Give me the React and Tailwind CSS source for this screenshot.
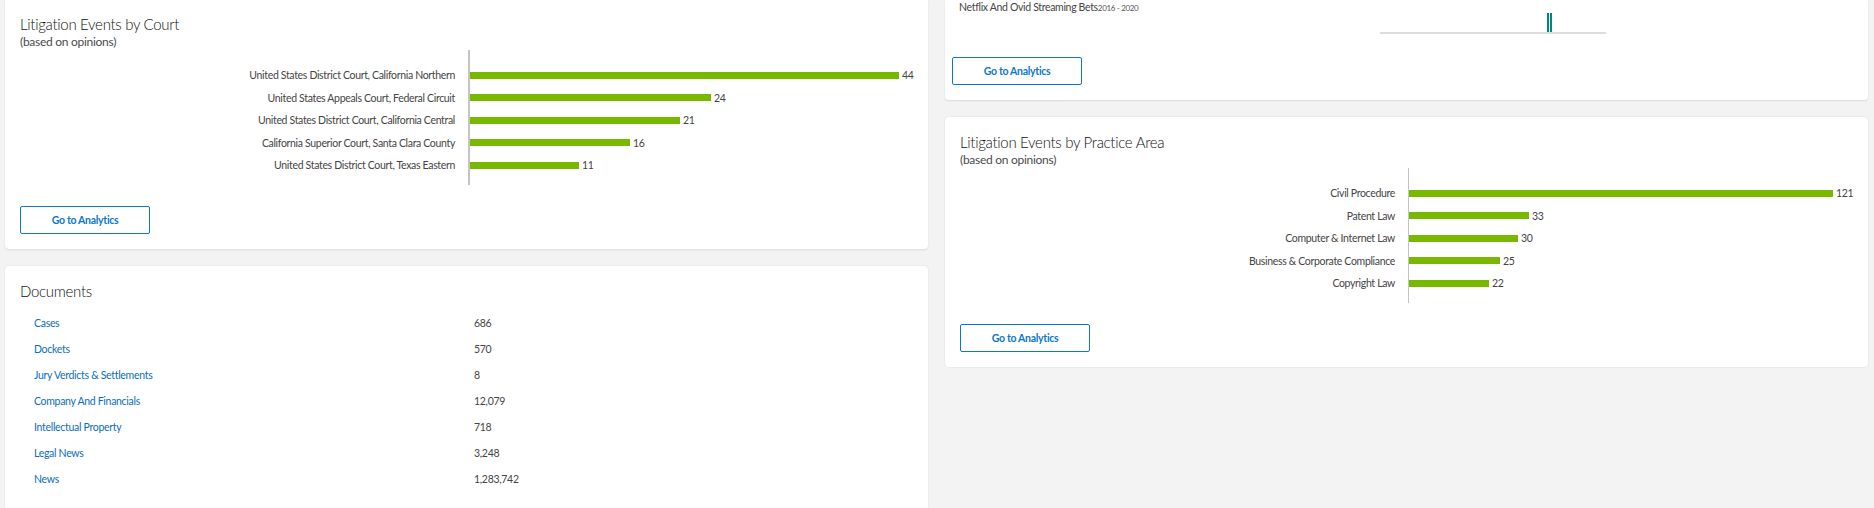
const courts = [
  { label: "United States District Court, California Northern", value: "44", bar: "w-[429px]" },
  { label: "United States Appeals Court, Federal Circuit", value: "24", bar: "w-[241px]" },
  { label: "United States District Court, California Central", value: "21", bar: "w-[210px]" },
  { label: "California Superior Court, Santa Clara County", value: "16", bar: "w-[160px]" },
  { label: "United States District Court, Texas Eastern", value: "11", bar: "w-[109px]" },
];

const practiceAreas = [
  { label: "Civil Procedure", value: "121", bar: "w-[424px]" },
  { label: "Patent Law", value: "33", bar: "w-[120px]" },
  { label: "Computer & Internet Law", value: "30", bar: "w-[109px]" },
  { label: "Business & Corporate Compliance", value: "25", bar: "w-[91px]" },
  { label: "Copyright Law", value: "22", bar: "w-[80px]" },
];

const documents = [
  { label: "Cases", value: "686" },
  { label: "Dockets", value: "570" },
  { label: "Jury Verdicts & Settlements", value: "8" },
  { label: "Company And Financials", value: "12,079" },
  { label: "Intellectual Property", value: "718" },
  { label: "Legal News", value: "3,248" },
  { label: "News", value: "1,283,742" },
];

const AnalyticsButton = ({ className }) => (
  <button
    className={`flex h-[28px] w-[130px] items-center justify-center rounded-[2px] border border-[#0a78cc] bg-white pt-[1px] text-[10.5px] font-bold tracking-[-0.3px] text-[#0a78cc] ${className}`}
  >
    Go to Analytics
  </button>
);

const CardTitle = ({ children }) => (
  <h2 className="h-[24px] text-[15px] leading-[24px] font-light tracking-[-0.3px] text-[#111111]">{children}</h2>
);

const EventsChart = ({ rows, labelWidth, axisClass, gapClass }) => (
  <div className="flex h-[135px] text-[10.5px] tracking-[-0.33px] text-[#444444]">
    <div className={`${labelWidth} ${gapClass} shrink-0 pt-[14px]`}>
      {rows.map((row) => (
        <div key={row.label} className="flex h-[22.5px] items-center justify-end whitespace-nowrap pt-[2px]">
          {row.label}
        </div>
      ))}
    </div>
    <div className={`grow pt-[14px] ${axisClass}`}>
      {rows.map((row) => (
        <div key={row.label} className="flex h-[22.5px] items-center gap-[3px]">
          <div className={`h-[7px] bg-[#78b900] ${row.bar}`} />
          <span className="pt-[2px]">{row.value}</span>
        </div>
      ))}
    </div>
  </div>
);

export default function App() {
  return (
    <div className="flex h-[508px] gap-[17px] overflow-hidden bg-[#f3f3f3] pl-[5px] font-[Lato,sans-serif]">
      {/* Left column */}
      <div className="flex w-[923px] shrink-0 flex-col gap-[17px]">
        <section className="h-[249px] shrink-0 rounded-b-[4px] bg-white pt-[12px] pl-[15px] shadow-[0_1px_2px_rgba(0,0,0,0.1)]">
          <CardTitle>Litigation Events by Court</CardTitle>
          <p className="h-[14px] text-[12px] leading-[12px] tracking-[-0.28px] text-[#4a4a4a]">(based on opinions)</p>
          <EventsChart
            rows={courts}
            labelWidth="w-[448px]"
            gapClass="pr-[13px]"
            axisClass="border-l-2 border-[#c4c4c4]"
          />
          <AnalyticsButton className="mt-[21px]" />
        </section>

        <section className="grow rounded-t-[4px] bg-white pt-[13px] pl-[15px] shadow-[0_0_2px_rgba(0,0,0,0.1)]">
          <CardTitle>Documents</CardTitle>
          <div className="mt-[7.5px] pl-[14px] text-[10.5px] tracking-[-0.3px]">
            {documents.map((doc) => (
              <div key={doc.label} className="grid h-[26.1px] grid-cols-[440px_1fr] items-center">
                <a className="text-[#0a6ebd]">{doc.label}</a>
                <span className="text-[#444444]">{doc.value}</span>
              </div>
            ))}
          </div>
        </section>
      </div>

      {/* Right column */}
      <div className="flex w-[923px] shrink-0 flex-col gap-[17px]">
        <section className="h-[100px] shrink-0 rounded-b-[4px] bg-white pl-[7px] shadow-[0_1px_2px_rgba(0,0,0,0.1)]">
          <div className="flex h-[34px] pl-[7px]">
            <div className="w-[421px] shrink-0 text-[10.5px] leading-[15px] tracking-[-0.33px] text-[#444444]">
              Netflix And Ovid Streaming Bets<span className="text-[8px] text-[#555555]">2016 - 2020</span>
            </div>
            <div className="flex h-[34px] w-[226px] gap-px border-b-2 border-[#dcdcdc] pt-[13px] pl-[167px]">
              <div className="h-[19px] w-[2px] bg-[#00857c]" />
              <div className="h-[19px] w-[2px] bg-[#00857c]" />
            </div>
          </div>
          <AnalyticsButton className="mt-[23px]" />
        </section>

        <section className="h-[250px] shrink-0 rounded-[4px] bg-white pt-[13px] pl-[15px] shadow-[0_0_2px_rgba(0,0,0,0.12)]">
          <CardTitle>Litigation Events by Practice Area</CardTitle>
          <p className="h-[14px] text-[12px] leading-[12px] tracking-[-0.28px] text-[#4a4a4a]">(based on opinions)</p>
          <EventsChart
            rows={practiceAreas}
            labelWidth="w-[448px]"
            gapClass="pr-[13px]"
            axisClass="border-l border-[#c4c4c4]"
          />
          <AnalyticsButton className="mt-[21px]" />
        </section>
      </div>
    </div>
  );
}
